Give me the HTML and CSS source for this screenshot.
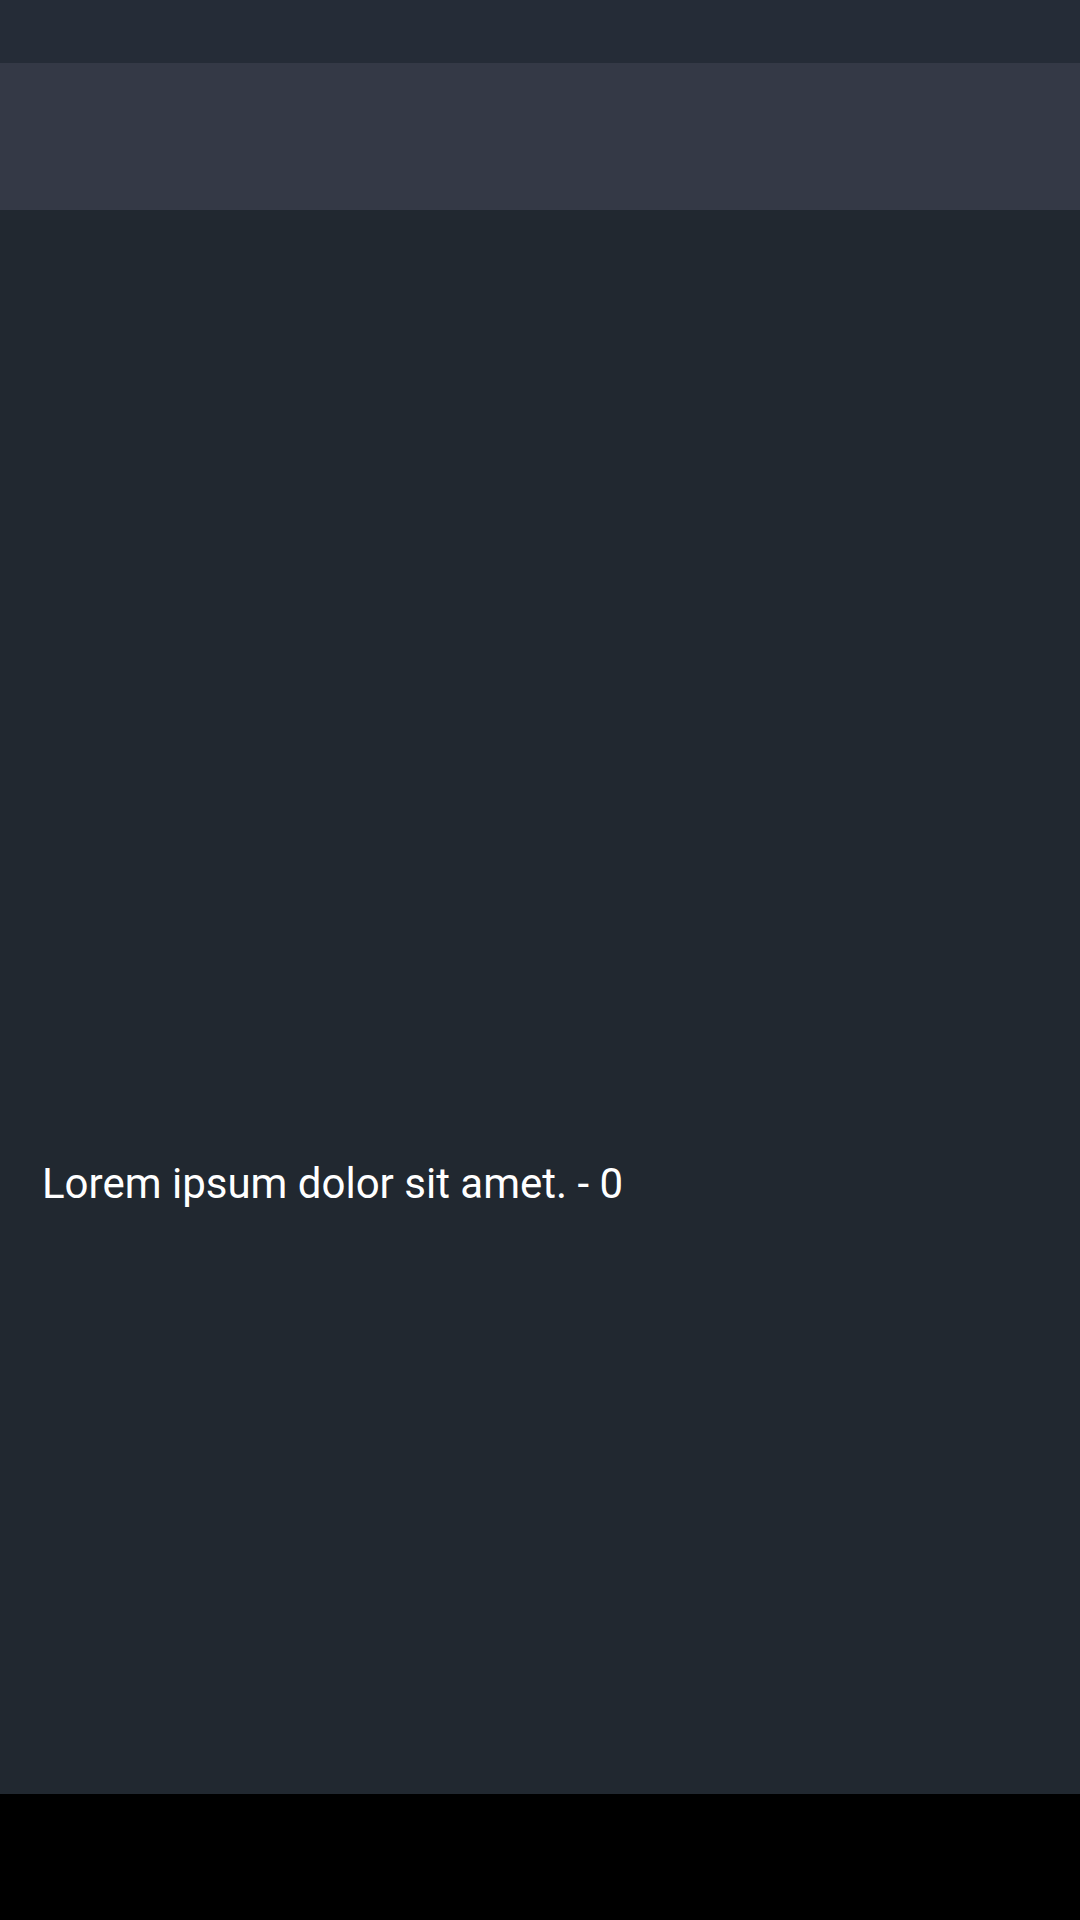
FILE: index.html
```html
<!DOCTYPE html>
<html>
<head>
<meta charset="utf-8">
<link rel="stylesheet" href="styles.css">
</head>
<body>
<div class="screen">
  <div class="status-bar"></div>
  <header class="app-bar"></header>
  <main class="content">
    <p class="item-text">Lorem ipsum dolor sit amet. - 0</p>
  </main>
  <div class="nav-bar"></div>
</div>
</body>
</html>
```
FILE: styles.css
```css
html, body {
  margin: 0;
  padding: 0;
  background: #000;
}
.screen {
  width: 1080px;
  height: 1920px;
  display: flex;
  flex-direction: column;
  font-family: Roboto, "Noto Sans", sans-serif;
}
.status-bar {
  height: 63px;
  background: #252c37;
}
.app-bar {
  height: 147px;
  background: #343946;
}
.content {
  flex: 1;
  background: #212830;
  padding: 949px 42px 0;
  box-sizing: border-box;
}
.item-text {
  margin: 0;
  color: #ffffff;
  font-size: 42px;
  line-height: 49px;
  font-weight: 400;
}
.nav-bar {
  height: 126px;
  background: #000;
}
```
